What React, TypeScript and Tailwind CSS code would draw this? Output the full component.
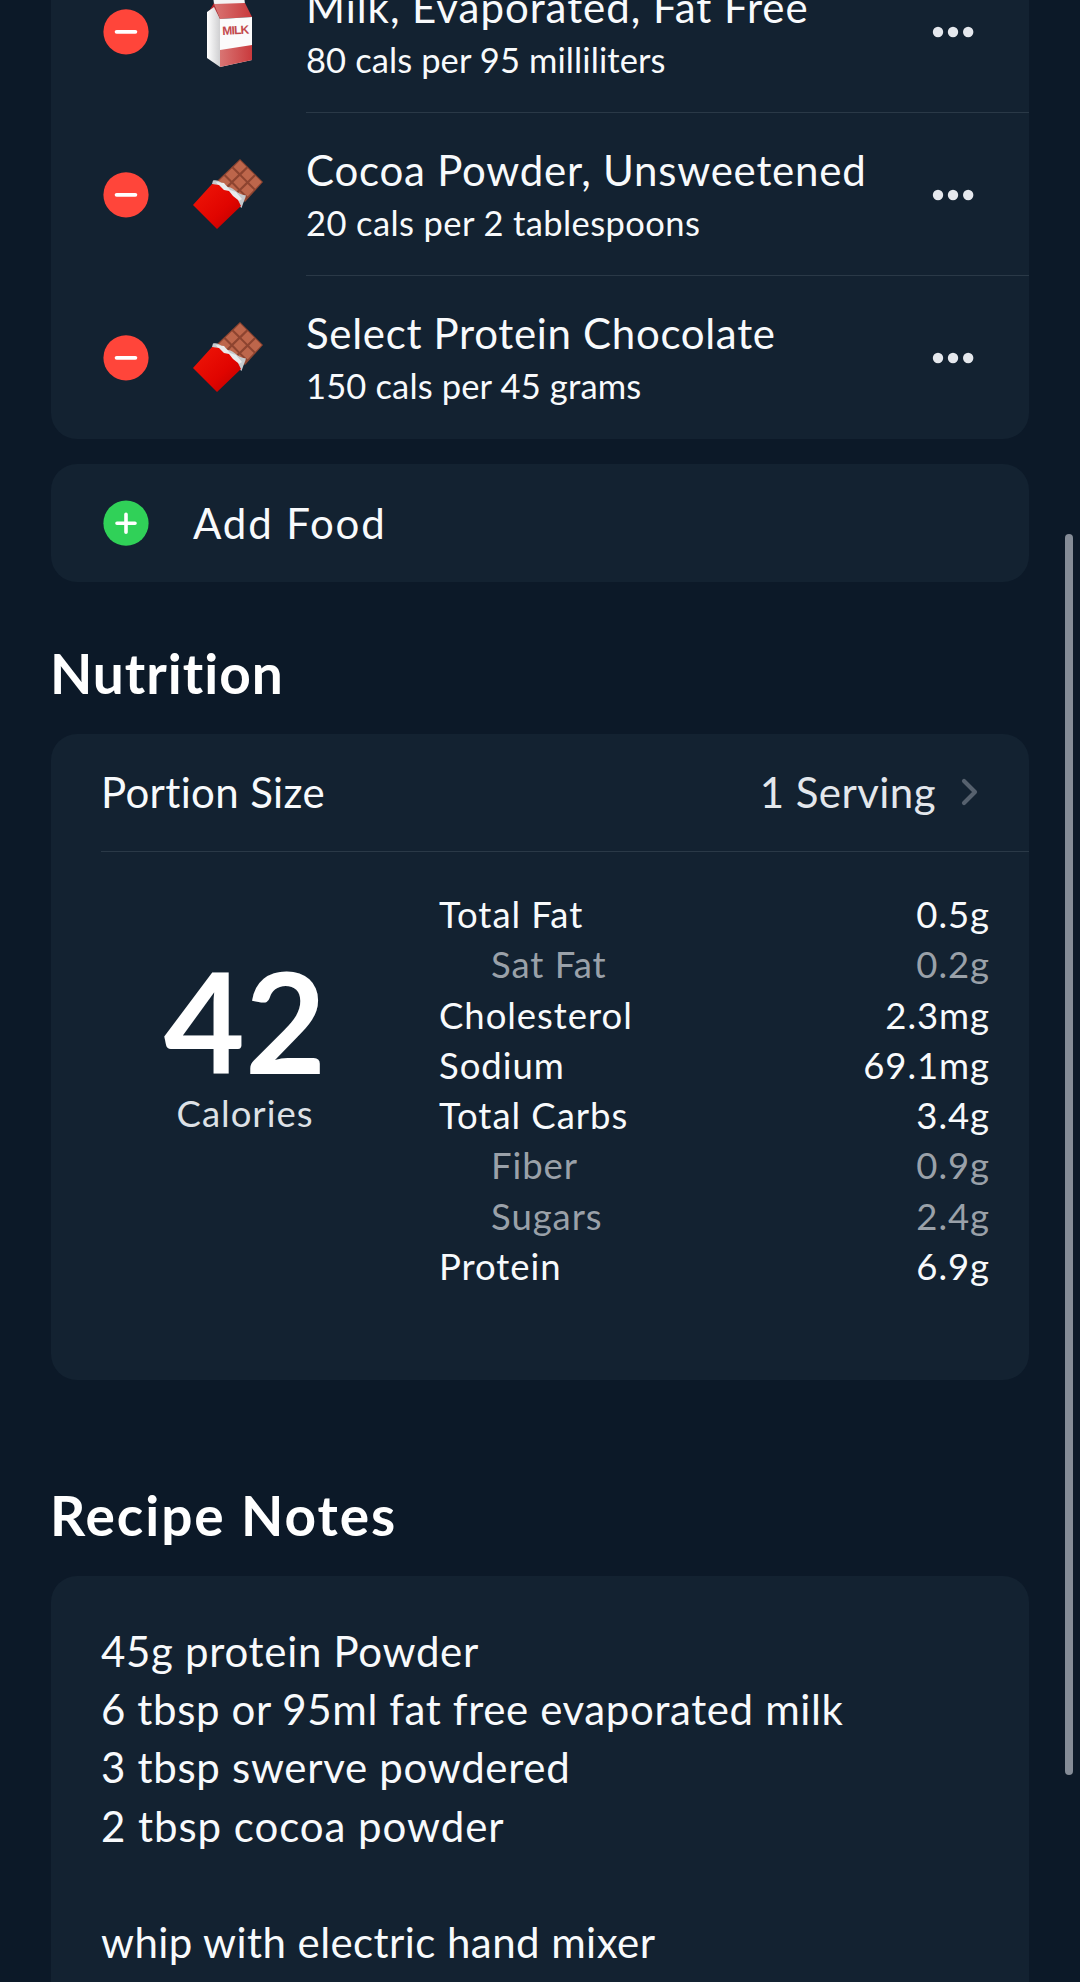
import type { ReactNode } from "react";

interface Food {
  name: string;
  serving: string;
  icon: "milk" | "chocolate";
  nameTracking: string;
  servingTracking: string;
}

interface Nutrient {
  label: string;
  value: string;
  sub?: boolean;
}

const foods: Food[] = [
  {
    name: "Milk, Evaporated, Fat Free",
    serving: "80 cals per 95 milliliters",
    icon: "milk",
    nameTracking: "tracking-[0.970px]",
    servingTracking: "tracking-[0.1px]",
  },
  {
    name: "Cocoa Powder, Unsweetened",
    serving: "20 cals per 2 tablespoons",
    icon: "chocolate",
    nameTracking: "tracking-[0.760px]",
    servingTracking: "tracking-[0.4px]",
  },
  {
    name: "Select Protein Chocolate",
    serving: "150 cals per 45 grams",
    icon: "chocolate",
    nameTracking: "tracking-[0.680px]",
    servingTracking: "tracking-[0.150px]",
  },
];

const nutrients: Nutrient[] = [
  { label: "Total Fat", value: "0.5g" },
  { label: "Sat Fat", value: "0.2g", sub: true },
  { label: "Cholesterol", value: "2.3mg" },
  { label: "Sodium", value: "69.1mg" },
  { label: "Total Carbs", value: "3.4g" },
  { label: "Fiber", value: "0.9g", sub: true },
  { label: "Sugars", value: "2.4g", sub: true },
  { label: "Protein", value: "6.9g" },
];

const notes = [
  { text: "45g protein Powder", tracking: "tracking-[0.7px]" },
  { text: "6 tbsp or 95ml fat free evaporated milk", tracking: "tracking-[0.620px]" },
  { text: "3 tbsp swerve powdered", tracking: "tracking-[0.7px]" },
  { text: "2 tbsp cocoa powder", tracking: "tracking-[0.950px]" },
  { text: "", tracking: "" },
  { text: "whip with electric hand mixer", tracking: "tracking-[0.430px]" },
];

function MinusIcon() {
  return (
    <svg viewBox="0 0 46 46" className="h-[46px] w-[46px] shrink-0">
      <circle cx="23" cy="22.800" r="22.6" fill="#ff453a" />
      <path d="M13.6 22.800h18.8" stroke="#fff" strokeWidth="3.8" strokeLinecap="round" />
    </svg>
  );
}

function PlusIcon() {
  return (
    <svg viewBox="0 0 46 46" className="h-[46px] w-[46px] shrink-0">
      <circle cx="23" cy="23.200" r="22.6" fill="#30d158" />
      <path
        d="M14 23.200h18M23 14.200v18"
        stroke="#fff"
        strokeWidth="3.6"
        strokeLinecap="round"
      />
    </svg>
  );
}

function MilkIcon() {
  return (
    <svg viewBox="0 0 72 72" className="h-[72px] w-[72px] shrink-0">
      <defs>
        <linearGradient id="milk-side" x1="0" x2="1">
          <stop offset="0" stopColor="#fff" />
          <stop offset="1" stopColor="#cfcfd1" />
        </linearGradient>
        <linearGradient id="milk-red" x1="0" x2="1">
          <stop offset="0" stopColor="#d97573" />
          <stop offset="1" stopColor="#c93a3d" />
        </linearGradient>
      </defs>
      <path d="M21 0h31l1 8H22z" fill="#f4f4f5" />
      <path d="M22 7l-6 10 12 6z" fill="#b9262c" />
      <path d="M15 16l7-5 6 12v48l-13-9z" fill="url(#milk-side)" />
      <path d="M22 8l31-1 7 14-32 2z" fill="url(#milk-red)" />
      <path d="M28 23l32-2v43l-32 7z" fill="#fbfbfb" />
      <path d="M28 54l32-5v15l-32 7z" fill="url(#milk-red)" />
      <text
        x="30.5"
        y="39"
        transform="rotate(-3 30 38)"
        fill="#c2494c"
        fontFamily="Liberation Sans"
        fontWeight="700"
        fontSize="12"
        textLength="27"
      >
        MILK
      </text>
    </svg>
  );
}

function ChocolateIcon() {
  return (
    <svg viewBox="0 0 72 72" className="mb-[2px] h-[72px] w-[72px] shrink-0">
      <defs>
        <linearGradient id="wrapper" x1="0" y1="0" x2="1" y2="1">
          <stop offset="0" stopColor="#f01708" />
          <stop offset="0.6" stopColor="#e00400" />
          <stop offset="1" stopColor="#b80000" />
        </linearGradient>
      </defs>
      {/* bar of squares above the torn foil */}
      <path d="M48 1L71 24 53 44 24 24z" fill="#8d4430" />
      <path
        d="M48 2.500l6.300 6.300-6.500 6.200-6.200-6zM55.800 10.300l6.300 6.300-6.500 6.400-6.200-6.300zM63.600 18l6 6-6.300 6.800-6.200-6.200zM40 10.300l6.200 6.200-6.400 6.300-6.300-6.200zM47.800 18l6.300 6.200-6.500 6.600-6.200-6.500zM55.600 25.900l6.200 6.200-6.200 6.500-6.500-6.300zM32 18l6.300 6.200-4.200 4.300-8.200-4.500zM39.900 25.700l6.200 6.400-4.600 4.400-6.500-5.300zM47.600 33.600l6.300 6.200-2 2.400-8.300-4.800z"
        fill="#bd664b"
      />
      <path d="M21 22.500c7-1.500 9 4.500 15 6.500 7 1 8 7 18 8.500l-4.500 12.500-5.500-5-9-9-12-8-3-2z" fill="#c6cacd" />
      <path d="M24 24l8 1 6 7 6 2 6 7-3 2-7-5-12-8z" fill="#e9ebec" />
      <path d="M20 26l7 1 5 5 5 1 4 5 5 4 3 6L25 71 1 47z" fill="url(#wrapper)" />
    </svg>
  );
}

function MoreIcon() {
  return (
    <svg viewBox="0 0 42 12" className="mt-[2px] h-3 w-[42px] shrink-0" fill="#e5e8ed">
      <circle cx="6" cy="6" r="5.200" />
      <circle cx="21" cy="6" r="5.200" />
      <circle cx="36.200" cy="6" r="5.200" />
    </svg>
  );
}

function Card({ className, children }: { className: string; children: ReactNode }) {
  return <section className={`mx-[51px] bg-[#132231] ${className}`}>{children}</section>;
}

function FoodRow({ food, last }: { food: Food; last: boolean }) {
  return (
    <div className="flex h-[163px] items-center pl-[52px]">
      <MinusIcon />
      <div className="ml-[43px]">
        {food.icon === "milk" ? <MilkIcon /> : <ChocolateIcon />}
      </div>
      <div
        className={`ml-[42px] flex h-full flex-1 items-center justify-between border-b pr-[55px] ${
          last ? "border-transparent" : "border-[#2a3947]"
        }`}
      >
        <div className="whitespace-nowrap">
          <div className={`text-[42px] leading-[50px] ${food.nameTracking}`}>
            {food.name}
          </div>
          <div className={`mt-[7px] text-[34.500px] leading-[42px] ${food.servingTracking}`}>
            {food.serving}
          </div>
        </div>
        <MoreIcon />
      </div>
    </div>
  );
}

export default function App() {
  return (
    <div className="relative h-[1982px] w-[1080px] overflow-hidden bg-[#0c1928] font-['Lato',sans-serif] text-[#f8fafc]">
      <Card className="-mt-[50px] rounded-b-[26px]">
        {foods.map((food, i) => (
          <FoodRow key={food.name} food={food} last={i === foods.length - 1} />
        ))}
      </Card>

      <Card className="mt-[25px] flex h-[118px] items-center rounded-[26px] pl-[52px]">
        <PlusIcon />
        <span className="ml-[44px] pb-px text-[42px] leading-[50px] tracking-[1.850px]">
          Add Food
        </span>
      </Card>

      <h2 className="ml-[50px] mt-[59px] text-[55px] font-bold leading-[64px] tracking-[1px] text-white">
        Nutrition
      </h2>

      <Card className="mt-[29px] h-[646px] rounded-[26px]">
        <div className="ml-[50px] flex h-[118px] items-center justify-between border-b border-[#2a3947] pb-px pr-[50px] text-[42px] leading-[50px]">
          <span className="tracking-[0.350px]">Portion Size</span>
          <span className="flex items-center tracking-[0.450px] text-[#e3e7ec]">
            1 Serving
            <svg viewBox="0 0 18 30" className="ml-[25px] h-[30px] w-[18px]" fill="none">
              <path
                d="M3 4l11 11L3 26"
                stroke="#56616e"
                strokeWidth="4.200"
                strokeLinecap="round"
                strokeLinejoin="round"
              />
            </svg>
          </span>
        </div>
        <div className="flex pl-[50px] pr-[39px] pt-[37px]">
          <div className="w-[288px] pt-[57px] text-center">
            <div className="text-[140px] font-bold leading-[148px] text-white">42</div>
            <div className="-mt-[3px] text-[36.500px] leading-[44px] tracking-[1px] text-[#dde1e6]">
              Calories
            </div>
          </div>
          <dl className="ml-[50px] flex-1 text-[36.500px] leading-[50.250px] tracking-[0.950px]">
            {nutrients.map((n) => (
              <div
                key={n.label}
                className={`flex justify-between ${n.sub ? "pl-[52px] text-[#9aa1a9]" : ""}`}
              >
                <dt>{n.label}</dt>
                <dd>{n.value}</dd>
              </div>
            ))}
          </dl>
        </div>
      </Card>

      <h2 className="ml-[50px] mt-[103px] text-[55px] font-bold leading-[64px] tracking-[1.950px] text-white">
        Recipe Notes
      </h2>

      <Card className="mt-[29px] h-[440px] rounded-t-[26px] pl-[50px] pt-[46px] text-[42px] leading-[58.200px]">
        {notes.map((line, i) => (
          <p key={i} className={`h-[58.200px] ${line.tracking}`}>
            {line.text}
          </p>
        ))}
      </Card>

      {/* scroll indicator */}
      <div className="absolute right-[7px] top-[534px] h-[1241px] w-2 rounded-full bg-[#858c97]" />
    </div>
  );
}
